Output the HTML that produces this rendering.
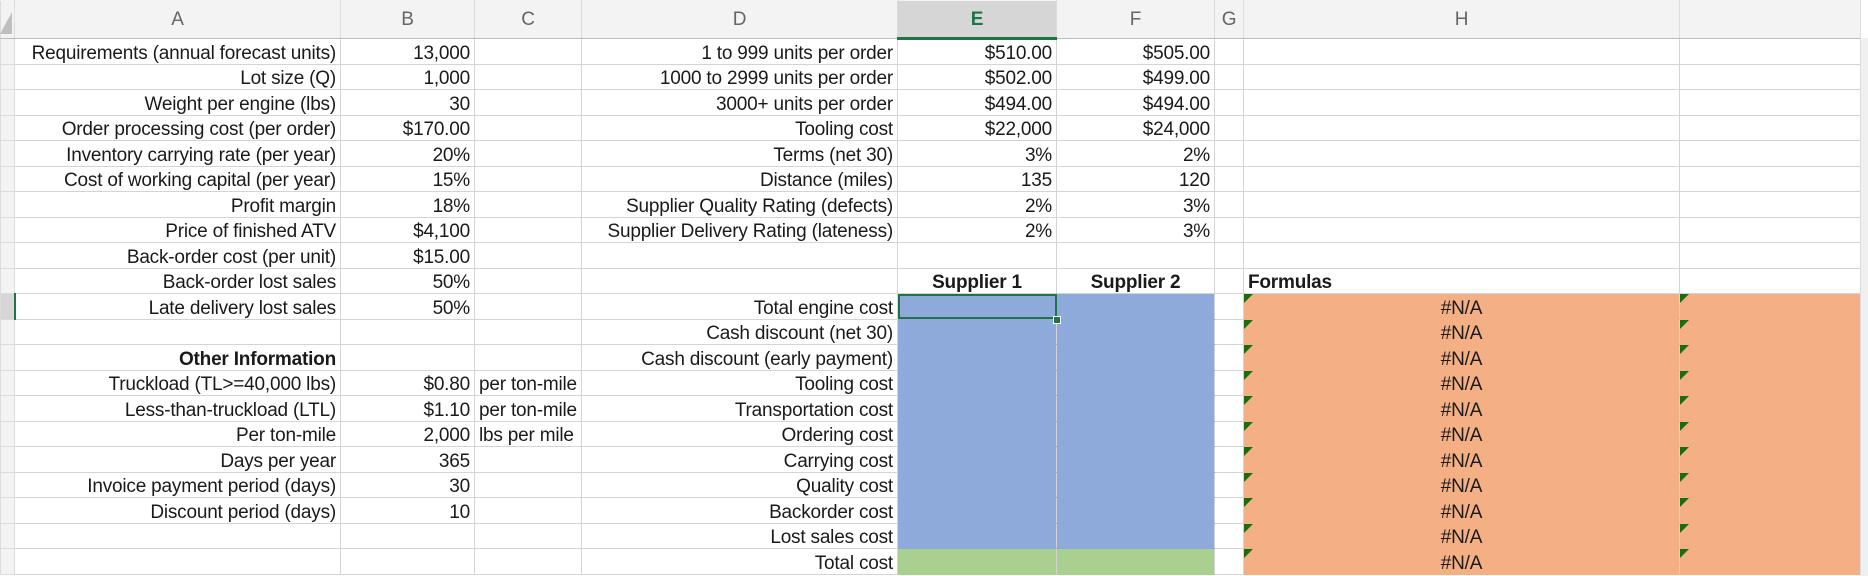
<!DOCTYPE html>
<html><head><meta charset="utf-8"><style>
body{margin:0;width:1868px;height:576px;overflow:hidden;background:#fff;font-family:"Liberation Sans",sans-serif;position:relative}
table{position:absolute;left:0;top:0;border-collapse:collapse;table-layout:fixed;width:1860px}
td{border:1px solid #d4d4d4;height:24.5px;max-height:24.5px;padding:0 4px;font-size:19px;color:#1a1a1a;white-space:nowrap;overflow:hidden;line-height:21px;position:relative;letter-spacing:-0.2px;box-sizing:border-box;vertical-align:bottom}
tr{height:25.5px}
tr.h{height:38px}
tr.h td{height:38px;background:#f3f3f3;color:#666;text-align:center;font-size:19px;border-color:#dcdcdc;border-bottom-color:#bdbdbd;border-top-color:#f3f3f3;vertical-align:middle}
td.rh{background:#f3f3f3;padding:0;border-color:#dcdcdc}
.r{text-align:right}.c{text-align:center}.b{font-weight:bold}
.bl{background:#8eaadb;border-top-color:#8eaadb;border-bottom-color:#8eaadb}
.gr{background:#a9d08e;border-top-color:#a9d08e;border-bottom-color:#a9d08e}
.or{background:#f4b084;border-top-color:#f4b084;border-bottom-color:#f4b084}
.bl+.bl{border-left-color:#8eaadb}.gr+.gr{border-left-color:#a9d08e}
.t::before{content:"";position:absolute;left:0;top:0;border-top:9px solid #1a6b14;border-right:9px solid transparent}
</style></head><body>
<table>
<colgroup><col style="width:14px"><col style="width:326px"><col style="width:134px"><col style="width:107px"><col style="width:316px"><col style="width:159px"><col style="width:158px"><col style="width:29px"><col style="width:436px"><col style="width:181px"></colgroup>
<tr class="h"><td style="background:#f3f3f3"></td><td>A</td><td>B</td><td>C</td><td>D</td><td style="background:#d6d6d6;color:#217346;font-weight:bold;border-bottom:3px solid #217346">E</td><td>F</td><td>G</td><td>H</td><td></td></tr>
<tr><td class="rh"></td><td class="r">Requirements (annual forecast units)</td><td class="r">13,000</td><td></td><td class="r">1 to 999 units per order</td><td class="r">$510.00</td><td class="r">$505.00</td><td></td><td></td><td></td></tr>
<tr><td class="rh"></td><td class="r">Lot size (Q)</td><td class="r">1,000</td><td></td><td class="r">1000 to 2999 units per order</td><td class="r">$502.00</td><td class="r">$499.00</td><td></td><td></td><td></td></tr>
<tr><td class="rh"></td><td class="r">Weight per engine (lbs)</td><td class="r">30</td><td></td><td class="r">3000+ units per order</td><td class="r">$494.00</td><td class="r">$494.00</td><td></td><td></td><td></td></tr>
<tr><td class="rh"></td><td class="r">Order processing cost (per order)</td><td class="r">$170.00</td><td></td><td class="r">Tooling cost</td><td class="r">$22,000</td><td class="r">$24,000</td><td></td><td></td><td></td></tr>
<tr><td class="rh"></td><td class="r">Inventory carrying rate (per year)</td><td class="r">20%</td><td></td><td class="r">Terms (net 30)</td><td class="r">3%</td><td class="r">2%</td><td></td><td></td><td></td></tr>
<tr><td class="rh"></td><td class="r">Cost of working capital (per year)</td><td class="r">15%</td><td></td><td class="r">Distance (miles)</td><td class="r">135</td><td class="r">120</td><td></td><td></td><td></td></tr>
<tr><td class="rh"></td><td class="r">Profit margin</td><td class="r">18%</td><td></td><td class="r">Supplier Quality Rating (defects)</td><td class="r">2%</td><td class="r">3%</td><td></td><td></td><td></td></tr>
<tr><td class="rh"></td><td class="r">Price of finished ATV</td><td class="r">$4,100</td><td></td><td class="r">Supplier Delivery Rating (lateness)</td><td class="r">2%</td><td class="r">3%</td><td></td><td></td><td></td></tr>
<tr><td class="rh"></td><td class="r">Back-order cost (per unit)</td><td class="r">$15.00</td><td></td><td></td><td></td><td></td><td></td><td></td><td></td></tr>
<tr><td class="rh"></td><td class="r">Back-order lost sales</td><td class="r">50%</td><td></td><td></td><td class="c b">Supplier 1</td><td class="c b">Supplier 2</td><td></td><td class="b">Formulas</td><td></td></tr>
<tr><td class="rh" style="background:#d6d6d6;border-right:2px solid #217346"></td><td class="r">Late delivery lost sales</td><td class="r">50%</td><td></td><td class="r">Total engine cost</td><td class="bl" style="outline:2px solid #217346;outline-offset:-2px"></td><td class="bl"></td><td></td><td class="or c t">#N/A</td><td class="or t"></td></tr>
<tr><td class="rh"></td><td></td><td></td><td></td><td class="r">Cash discount (net 30)</td><td class="bl"></td><td class="bl"></td><td></td><td class="or c t">#N/A</td><td class="or t"></td></tr>
<tr><td class="rh"></td><td class="r b">Other Information</td><td></td><td></td><td class="r">Cash discount (early payment)</td><td class="bl"></td><td class="bl"></td><td></td><td class="or c t">#N/A</td><td class="or t"></td></tr>
<tr><td class="rh"></td><td class="r">Truckload (TL&gt;=40,000 lbs)</td><td class="r">$0.80</td><td>per ton-mile</td><td class="r">Tooling cost</td><td class="bl"></td><td class="bl"></td><td></td><td class="or c t">#N/A</td><td class="or t"></td></tr>
<tr><td class="rh"></td><td class="r">Less-than-truckload (LTL)</td><td class="r">$1.10</td><td>per ton-mile</td><td class="r">Transportation cost</td><td class="bl"></td><td class="bl"></td><td></td><td class="or c t">#N/A</td><td class="or t"></td></tr>
<tr><td class="rh"></td><td class="r">Per ton-mile</td><td class="r">2,000</td><td>lbs per mile</td><td class="r">Ordering cost</td><td class="bl"></td><td class="bl"></td><td></td><td class="or c t">#N/A</td><td class="or t"></td></tr>
<tr><td class="rh"></td><td class="r">Days per year</td><td class="r">365</td><td></td><td class="r">Carrying cost</td><td class="bl"></td><td class="bl"></td><td></td><td class="or c t">#N/A</td><td class="or t"></td></tr>
<tr><td class="rh"></td><td class="r">Invoice payment period (days)</td><td class="r">30</td><td></td><td class="r">Quality cost</td><td class="bl"></td><td class="bl"></td><td></td><td class="or c t">#N/A</td><td class="or t"></td></tr>
<tr><td class="rh"></td><td class="r">Discount period (days)</td><td class="r">10</td><td></td><td class="r">Backorder cost</td><td class="bl"></td><td class="bl"></td><td></td><td class="or c t">#N/A</td><td class="or t"></td></tr>
<tr><td class="rh"></td><td></td><td></td><td></td><td class="r">Lost sales cost</td><td class="bl"></td><td class="bl"></td><td></td><td class="or c t">#N/A</td><td class="or t"></td></tr>
<tr><td class="rh"></td><td></td><td></td><td></td><td class="r">Total cost</td><td class="gr"></td><td class="gr"></td><td></td><td class="or c t">#N/A</td><td class="or t"></td></tr>
</table>
<div style="position:absolute;left:0;top:12px;width:0;height:0;border-left:12px solid transparent;border-bottom:22px solid #bfbfbf"></div>
<div style="position:absolute;left:1053px;top:316px;width:6px;height:6px;background:#217346;border:1px solid #fff"></div>
<div style="position:absolute;left:1860px;top:38px;width:8px;height:538px;background:#f0f0f0;border-left:1px solid #ddd"></div>
</body></html>
